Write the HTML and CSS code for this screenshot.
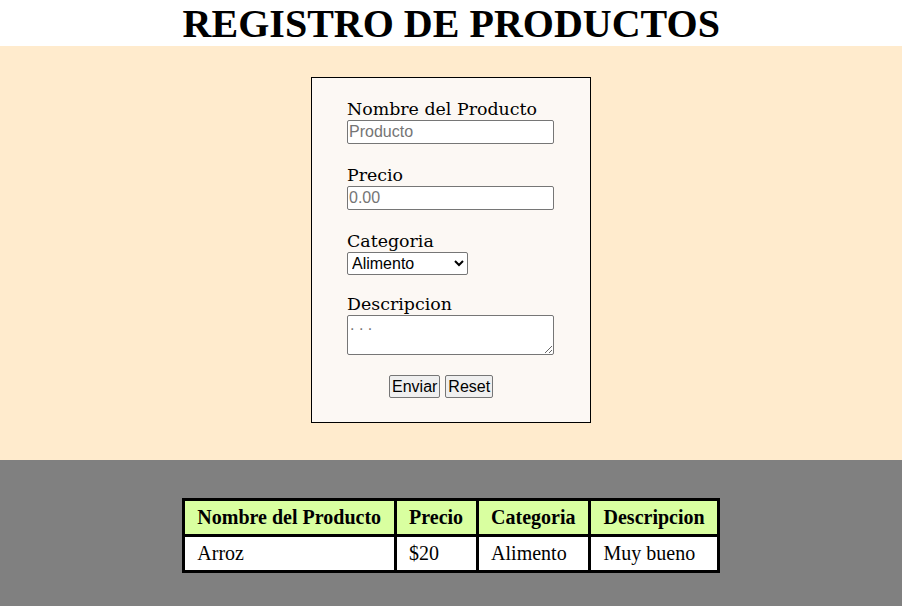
FILE: index.html
```html
<!DOCTYPE html>
<html lang="es">
<head>
<meta charset="utf-8">
<title>Registro de Productos</title>
<link rel="stylesheet" href="styles.css">
</head>
<body>
<header class="top">
  <h1 class="title">REGISTRO DE PRODUCTOS</h1>
</header>
<section class="form-area">
  <form class="card">
    <div class="field">
      <label class="label" for="nombre">Nombre del Producto</label>
      <input class="text-input" id="nombre" type="text" placeholder="Producto">
    </div>
    <div class="field">
      <label class="label" for="precio">Precio</label>
      <input class="text-input" id="precio" type="text" placeholder="0.00">
    </div>
    <div class="field field-select">
      <label class="label" for="categoria">Categoria</label>
      <select class="select" id="categoria">
        <option>Alimento</option>
      </select>
    </div>
    <div class="field">
      <label class="label" for="descripcion">Descripcion</label>
      <textarea class="textarea" id="descripcion" placeholder=". . ."></textarea>
    </div>
    <div class="actions">
      <button class="btn" type="button">Enviar</button>
      <button class="btn" type="reset">Reset</button>
    </div>
  </form>
</section>
<section class="table-area">
  <table class="products">
    <thead>
      <tr>
        <th>Nombre del Producto</th>
        <th>Precio</th>
        <th>Categoria</th>
        <th>Descripcion</th>
      </tr>
    </thead>
    <tbody>
      <tr>
        <td>Arroz</td>
        <td>$20</td>
        <td>Alimento</td>
        <td>Muy bueno</td>
      </tr>
    </tbody>
  </table>
</section>
</body>
</html>
```

FILE: styles.css
```css
html, body {
  margin: 0;
  padding: 0;
}
body {
  background: #808080;
  font-family: "Liberation Serif", "Times New Roman", serif;
}
.top {
  background: #ffffff;
  height: 46px;
  display: flex;
  justify-content: center;
  align-items: flex-end;
}
.title {
  margin: 0;
  font-size: 41px;
  font-weight: bold;
  line-height: 46px;
  color: #000;
  white-space: nowrap;
  transform: scaleX(0.976);
}
.form-area {
  background: #ffebcd;
  height: 414px;
  display: flex;
  justify-content: center;
  padding-top: 31px;
  box-sizing: border-box;
}
.card {
  width: 280px;
  height: 346px;
  box-sizing: border-box;
  border: 1px solid #000;
  background: #fcf8f4;
  padding: 20px 35px 0 35px;
}
.field {
  display: flex;
  flex-direction: column;
  align-items: flex-start;
  margin-bottom: 20px;
}
.field-select {
  margin-bottom: 18px;
}
.label {
  font-family: "DejaVu Serif", Georgia, serif;
  font-size: 17.4px;
  line-height: 22px;
  color: #000;
}
.text-input {
  width: 207px;
  height: 24px;
  box-sizing: border-box;
  font-family: "Liberation Sans", Arial, sans-serif;
  font-size: 16px;
  padding: 0 1px;
  border: 1px solid #767676;
  border-radius: 2px;
  background: #fff;
}
.text-input::placeholder, .textarea::placeholder {
  color: #757575;
}
.select {
  width: 121px;
  height: 23px;
  font-family: "Liberation Sans", Arial, sans-serif;
  font-size: 16px;
  border: 1px solid #767676;
  border-radius: 2px;
  background: #fff;
  color: #000;
}
.textarea {
  width: 207px;
  height: 40px;
  box-sizing: border-box;
  font-family: "Liberation Sans", Arial, sans-serif;
  font-size: 16px;
  line-height: 18px;
  border: 1px solid #767676;
  border-radius: 2px;
  padding: 0 2px;
  margin: 0;
}
.actions {
  display: flex;
  justify-content: flex-start;
  align-items: flex-start;
  gap: 5px;
  margin-top: 5px;
  padding-left: 42px;
}
.btn {
  box-sizing: border-box;
  font-family: "Liberation Sans", Arial, sans-serif;
  font-size: 16px;
  line-height: 21px;
  height: 23px;
  padding: 0 2px;
  border: 1px solid #767676;
  border-radius: 2px;
  background: #efefef;
  color: #000;
}
.table-area {
  display: flex;
  justify-content: center;
  padding: 38px 0 34px;
}
.products {
  border-collapse: collapse;
  border: 3px solid #000;
  font-size: 20px;
}
.products th, .products td {
  border: 3px solid #000;
  padding: 5px 12.5px;
  line-height: 23px;
  text-align: left;
  color: #000;
}
.products th {
  background: #d9ffa0;
  font-weight: bold;
}
.products td {
  background: #fff;
  font-weight: normal;
}
```
